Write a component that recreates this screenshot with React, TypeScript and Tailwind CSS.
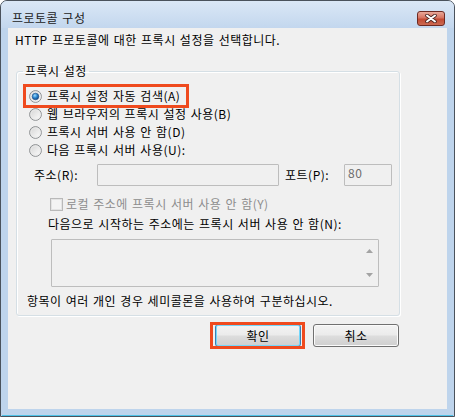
import React from "react";

const font = "font-['Noto_Sans_CJK_KR','Noto_Sans',sans-serif]";

function Radio({ id, checked }: { id: string; checked?: boolean }) {
  return (
    <svg width="13" height="13" viewBox="0 0 13 13" className="shrink-0">
      <defs>
        <linearGradient id={`${id}-bg`} x1="0" y1="0" x2="1" y2="1">
          <stop offset="0" stopColor="#d2d2d2" />
          <stop offset="1" stopColor="#ffffff" />
        </linearGradient>
        <radialGradient id={`${id}-dot`} cx="0.4" cy="0.35" r="0.7">
          <stop offset="0" stopColor="#9fdcff" />
          <stop offset="0.5" stopColor="#2a86cf" />
          <stop offset="1" stopColor="#0e3f7a" />
        </radialGradient>
      </defs>
      <circle cx="6.5" cy="6.5" r="5.9" fill={`url(#${id}-bg)`} stroke="#8c8f91" strokeWidth="1" />
      <circle cx="6.5" cy="6.5" r="4.6" fill="none" stroke="#ebebeb" strokeWidth="0.8" />
      {checked && <circle cx="6.5" cy="6.5" r="3.3" fill={`url(#${id}-dot)`} stroke="#1d4e86" strokeWidth="0.6" />}
    </svg>
  );
}

function RadioRow({ id, label, checked }: { id: string; label: string; checked?: boolean }) {
  return (
    <div className="h-[18px] flex items-center ml-[2px] gap-[5px]">
      <Radio id={id} checked={checked} />
      <span className="leading-[18px] whitespace-nowrap">{label}</span>
    </div>
  );
}

function WinButton({ label, isDefault }: { label: string; isDefault?: boolean }) {
  return (
    <div
      className={`w-[86px] h-[23px] rounded-[3px] border flex items-center justify-center ${
        isDefault ? "border-[#3c7fb1] shadow-[inset_0_0_0_1px_#74d7fb]" : "border-[#707070] shadow-[inset_0_0_0_1px_#fbfbfb]"
      } bg-[linear-gradient(#f3f3f3_0%,#ebebeb_48%,#dddddd_52%,#cfcfcf_100%)]`}
    >
      <span className="leading-[16px]">{label}</span>
    </div>
  );
}

export default function App() {
  return (
    <div className={`w-[455px] h-[417px] ${font} text-[12px] tracking-[0.5px] [word-spacing:1px] text-black`}>
      <div className="h-full rounded-t-[7px] border border-[#4a525c] bg-[#bed4ec] flex flex-col overflow-hidden">
        {/* title bar */}
        <div className="h-[27px] shrink-0 flex items-center pt-[7px] pl-[11px] pr-[9px] bg-[linear-gradient(#dae7f6,#c3d7ee)]">
          <span className="leading-[16px] text-[#1b1b1b]">프로토콜 구성</span>
          <div className="ml-auto w-[28px] h-[15px] rounded-[3px] border border-[#6e2a22] bg-[linear-gradient(#e9a899_0%,#d77462_45%,#c24a33_55%,#cc6a52_100%)] flex items-center justify-center">
            <svg width="12" height="9" viewBox="0 0 12 9">
              <path d="M2 1.5 L10 7.5 M10 1.5 L2 7.5" stroke="#4a2420" strokeWidth="3.6" strokeLinecap="round" />
              <path d="M2 1.5 L10 7.5 M10 1.5 L2 7.5" stroke="#ffffff" strokeWidth="2" strokeLinecap="round" />
            </svg>
          </div>
        </div>

        {/* client area */}
        <div className="mx-[7px] h-[381px] shrink-0 bg-[#f0f0f0] flex flex-col">
          <div className="pt-[4px] pl-[7px] leading-[16px]">HTTP 프로토콜에 대한 프록시 설정을 선택합니다.</div>

          <div className="ml-[8px] w-[384px] mt-[15px] flex flex-col">
            <fieldset className="border border-[#d5dfe5] rounded-[3px] shadow-[inset_1px_1px_0_#ffffff,1px_1px_0_#ffffff] h-[253px] m-0 p-0">
              <legend className="ml-[6px] px-[2px] leading-[16px]">프록시 설정</legend>
              <div className="pl-[10px] pt-[8px] flex flex-col">
                <div className="relative">
                  <RadioRow id="r1" label="프록시 설정 자동 검색(A)" checked />
                  <span className="absolute left-[-4px] top-[-3px] w-[166px] h-[24px] border-[3px] border-[#ef4a1e] pointer-events-none" />
                </div>
                <RadioRow id="r2" label="웹 브라우저의 프록시 설정 사용(B)" />
                <RadioRow id="r3" label="프록시 서버 사용 안 함(D)" />
                <RadioRow id="r4" label="다음 프록시 서버 사용(U):" />

                <div className="mt-[5px] h-[22px] flex items-center ml-[7px]">
                  <span className="w-[63px] leading-[16px]">주소(R):</span>
                  <div className="w-[182px] h-[22px] border border-[#bdbdbd] rounded-[1px] bg-[#f0f0f0]" />
                  <span className="ml-[6px] w-[59px] leading-[16px]">포트(P):</span>
                  <div className="w-[48px] h-[22px] border border-[#bdbdbd] rounded-[1px] bg-[#f0f0f0] pl-[3px] pt-[1px] leading-[13px] text-[#6d6d6d]">
                    80
                  </div>
                </div>

                <div className="mt-[9px] h-[18px] flex items-center ml-[23px] gap-[3px]">
                  <span className="w-[13px] h-[13px] border border-[#b9b9b9] bg-[#f4f4f4] shadow-[inset_0_0_0_1px_#e4e4e4] shrink-0" />
                  <span className="leading-[18px] text-[#8d8d8d] whitespace-nowrap">로컬 주소에 프록시 서버 사용 안 함(Y)</span>
                </div>

                <div className="mt-[2px] h-[18px] ml-[21px] leading-[18px] whitespace-nowrap">
                  다음으로 시작하는 주소에는 프록시 서버 사용 안 함(N):
                </div>

                <div className="mt-[6px] ml-[24px] w-[328px] h-[48px] border border-[#bdbdbd] rounded-[1px] bg-[#f0f0f0] flex justify-end">
                  <div className="w-[17px] flex flex-col items-center justify-between pt-[9px] pb-[9px]">
                    <svg width="7" height="4" viewBox="0 0 7 4">
                      <path d="M0 4 L3.5 0 L7 4 Z" fill="#a3a3a3" />
                    </svg>
                    <svg width="7" height="4" viewBox="0 0 7 4">
                      <path d="M0 0 L3.5 4 L7 0 Z" fill="#a3a3a3" />
                    </svg>
                  </div>
                </div>

                <div className="mt-[5px] h-[18px] leading-[18px] whitespace-nowrap">
                  항목이 여러 개인 경우 세미콜론을 사용하여 구분하십시오.
                </div>
              </div>
            </fieldset>

            <div className="mt-[8px] flex justify-end gap-[12px] pr-[1px]">
              <div className="relative">
                <WinButton label="확인" isDefault />
                <span className="absolute left-[-5px] top-[-2px] w-[95px] h-[27px] border-[3px] border-[#ef4a1e] pointer-events-none" />
              </div>
              <WinButton label="취소" />
            </div>
          </div>
        </div>
        <div className="flex-1" />
        <div className="h-px bg-[#4fc3e8] mx-[1px]" />
      </div>
    </div>
  );
}
